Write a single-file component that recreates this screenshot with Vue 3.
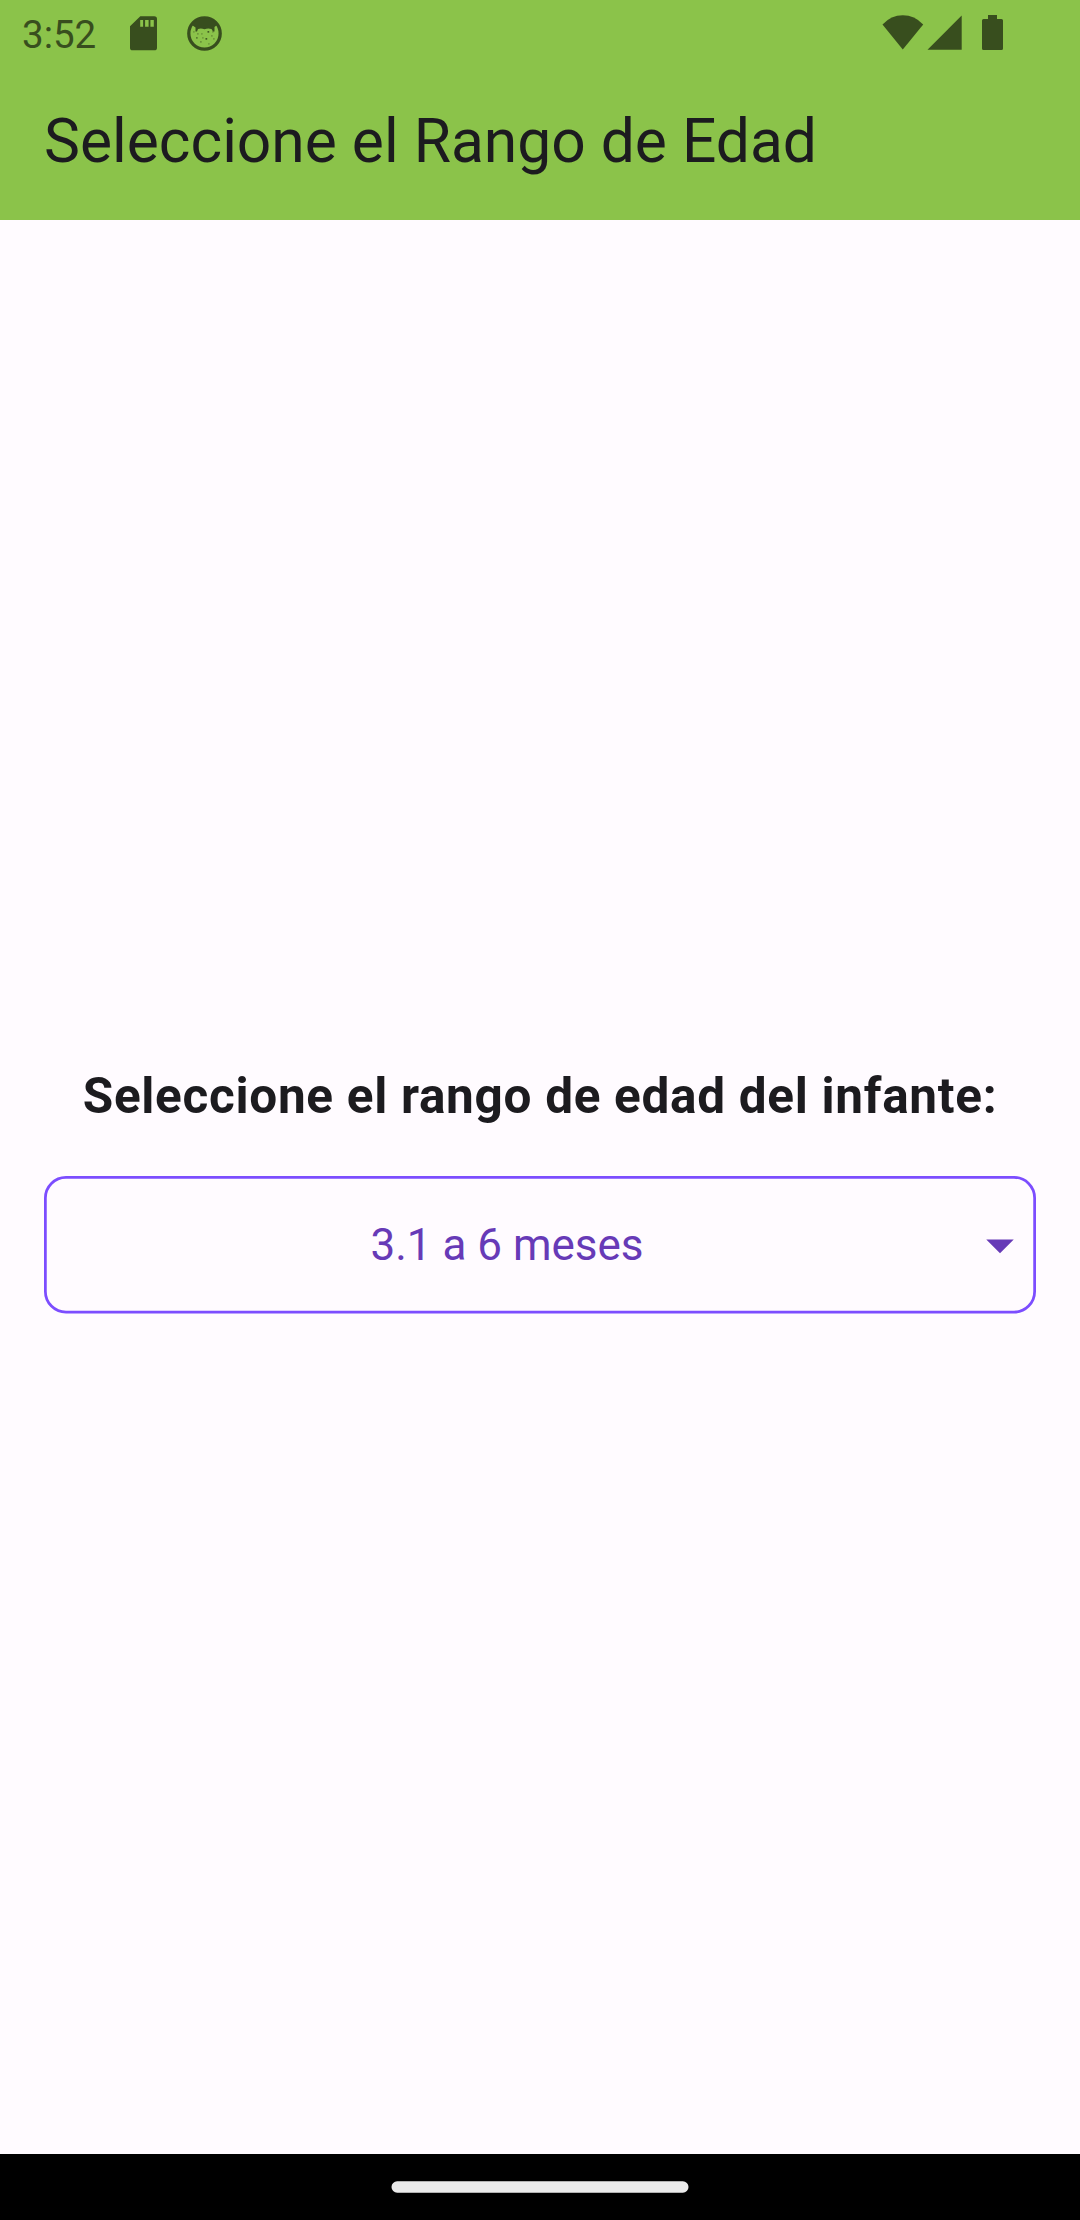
<script setup>
import { ref } from 'vue'

const time = ref('3:52')
const selected = ref('3.1 a 6 meses')

// Whiskers and nose specks of the notification face icon: [x, y, opacity]
const specks = [
  [6, 15, 0.3], [10, 17, 0.35], [9, 21, 0.6], [14, 17, 0.3], [20.5, 15, 0.9],
  [25, 15, 0.3], [13, 25, 0.4], [18.500, 22, 0.9], [24, 19, 0.35],
  [26, 22, 0.35], [21, 27, 0.3], [15, 21, 0.3]
]
</script>

<template>
  <div class="screen">
    <header class="top">
      <div class="status">
        <span class="time">{{ time }}</span>
        <svg class="sd" width="27" height="35" viewBox="0 0 27 35">
          <path fill="currentColor" fill-rule="evenodd" d="M10.3 0.3H24.2Q27 0.3 27 3V31.700Q27 34.300 24.300 34.300H2.600Q0 34.300 0 31.700V10.300ZM10.200 4V10.800H13.100V4ZM15.100 4V10.800H18.600V4ZM20.400 4V10.800H23.800V4Z" />
        </svg>
        <svg class="face" width="35" height="35" viewBox="0 0 35 35">
          <circle cx="17.500" cy="17.500" r="15.700" fill="none" stroke="currentColor" stroke-width="3.300" />
          <path fill="currentColor" d="M5 9Q9 2 17.500 2T30 9L27.500 11V15.500H26L24.500 13Q21 12 17.500 13.200Q14 12 11 13L10 15.500H8.500V11.500Z" />
          <rect v-for="([x, y, o], i) in specks" :key="i" :x="x" :y="y" width="1.700" height="1.700" :opacity="o" fill="currentColor" />
        </svg>
        <span class="spacer"></span>
        <svg class="wifi" width="42" height="35" viewBox="0 0 42 35">
          <path fill="currentColor" d="M0.500 9.500Q9 0.300 20.800 0.300T41.200 9.500L20.800 34.500Z" />
        </svg>
        <svg class="signal" width="35" height="35" viewBox="0 0 35 35">
          <path fill="currentColor" d="M0.500 34.700L34.700 0.500V34.700Z" />
        </svg>
        <svg class="battery" width="21" height="35" viewBox="0 0 21 35">
          <path fill="currentColor" d="M6 0H15V4H19.500Q21 4 21 5.500V33.500Q21 35 19.500 35H1.500Q0 35 0 33.500V5.500Q0 4 1.500 4H6Z" />
        </svg>
      </div>
      <h1 class="title">Seleccione el Rango de Edad</h1>
    </header>

    <main class="content">
      <p class="prompt">Seleccione el rango de edad del infante:</p>
      <div class="dropdown" role="button">
        <svg class="outline" width="992" height="138" viewBox="0 0 992 138">
          <rect x="1.375" y="1.375" width="989.250" height="134.750" rx="20.625" fill="none" stroke="#7c4dff" stroke-width="2.750" />
        </svg>
        <span class="value">{{ selected }}</span>
        <svg class="arrow" width="66" height="66" viewBox="0 0 24 24">
          <path fill="currentColor" d="M7 10l5 5 5-5z" />
        </svg>
      </div>
    </main>

    <footer class="nav">
      <svg width="298" height="14" viewBox="0 0 298 14">
        <rect x="0.500" y="1.300" width="297" height="11.400" rx="5.700" fill="#ebebeb" />
      </svg>
    </footer>
  </div>
</template>

<style>
body {
  margin: 0;
  background: #fffbff;
}
</style>

<style scoped>
.screen {
  display: flex;
  flex-direction: column;
  width: 1080px;
  height: 2220px;
  overflow: hidden;
  background: #fffbff;
  color: #1c1b1f;
  font-family: Roboto, "Noto Sans", sans-serif;
}
svg {
  display: block;
  flex: none;
}
.top {
  height: 220px;
  flex: none;
  background: #8bc34a;
}
.status {
  box-sizing: border-box;
  display: flex;
  align-items: flex-start;
  height: 66px;
  padding: 0 76px 0 22px;
  color: #384e1e;
}
.time {
  width: 108px;
  margin-top: 12px;
  font-size: 38.5px;
  line-height: 45px;
}
.sd {
  margin-top: 16px;
}
.face {
  margin: 16px 0 0 30px;
}
.spacer {
  flex: 1;
}
.wifi {
  margin-top: 15px;
}
.signal {
  margin: 15px 0 0 3px;
}
.battery {
  margin: 15px 1px 0 20px;
}
.title {
  margin: 0;
  padding-left: 44px;
  font-size: 60.5px;
  font-weight: 400;
  line-height: 152px;
  white-space: nowrap;
}
.content {
  flex: 1;
  display: flex;
  flex-direction: column;
  justify-content: center;
  padding: 0 44px;
}
.prompt {
  margin: 0 0 44px;
  font-size: 49.5px;
  font-weight: 700;
  line-height: 72px;
  letter-spacing: 0.6875px;
  text-align: center;
  white-space: nowrap;
}
.dropdown {
  position: relative;
  display: flex;
  align-items: center;
  height: 138px;
  box-sizing: border-box;
  padding: 0 3px;
  color: #673ab7;
}
.outline {
  position: absolute;
  inset: 0;
}
.value {
  flex: 1;
  font-size: 44px;
  line-height: 66px;
  text-align: center;
}
.nav {
  display: flex;
  align-items: center;
  justify-content: center;
  height: 66px;
  flex: none;
  background: #000;
}
</style>
